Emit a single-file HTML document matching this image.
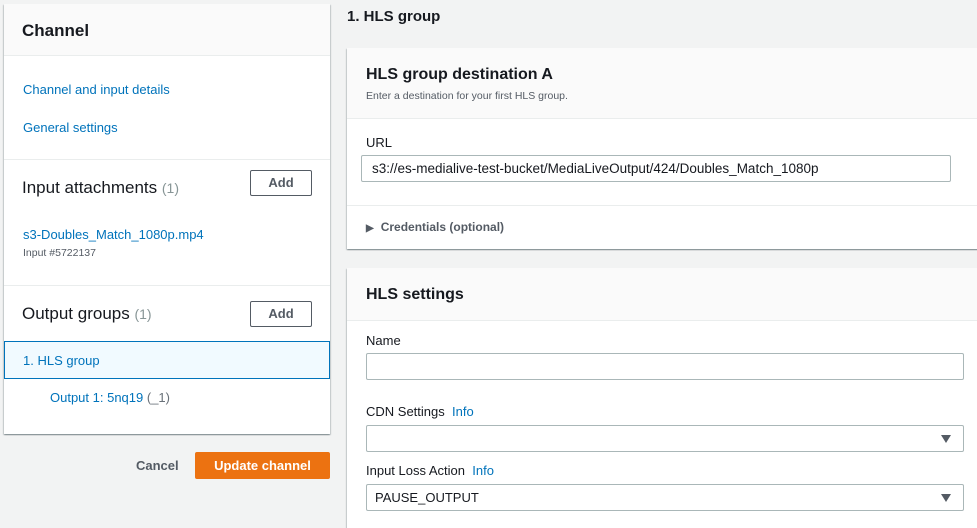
<!DOCTYPE html>
<html><head><style>
*{box-sizing:border-box;margin:0;padding:0}
body{width:977px;height:518px;overflow:hidden;background:#f2f3f3;font-family:"Liberation Sans",Arial,sans-serif;color:#16191f;position:relative}
.abs{position:absolute}
.panel{background:#fff;box-shadow:0 1px 1px rgba(0,28,36,.3),1px 1px 1px rgba(0,28,36,.15),-1px 1px 1px rgba(0,28,36,.15)}
a{color:#0073bb;text-decoration:none}
.btn{position:absolute;border:1px solid #545b64;border-radius:2px;background:#fff;font-weight:bold;font-size:13px;color:#545b64;text-align:center;line-height:24px}
.cnt{color:#879596;font-size:14px}
.lbl{position:absolute;font-size:13px;color:#16191f}
.inp{position:absolute;border:1px solid #aab7b8;border-radius:2px;background:#fff;font-size:13px;padding-left:10px;line-height:25px}
.arr{position:absolute;right:12px;top:9px;width:0;height:0;border-left:5px solid transparent;border-right:5px solid transparent;border-top:8px solid #545b64}
.hr{position:absolute;left:0;right:0;height:1px;background:#eaeded}
</style></head><body>
<div class="abs panel" style="left:4px;top:4px;width:326px;height:430px">
  <div class="abs" style="left:0;top:0;right:0;height:52px;background:#fafafa;border-bottom:1px solid #eaeded"></div>
  <div class="abs" style="left:18px;top:17px;font-size:17px;font-weight:bold">Channel</div>
  <a class="abs" style="left:19px;top:78px;font-size:13px">Channel and input details</a>
  <a class="abs" style="left:19px;top:116px;font-size:13px">General settings</a>
  <div class="hr" style="top:155px"></div>
  <div class="abs" style="left:18px;top:174px;font-size:17px">Input attachments <span class="cnt">(1)</span></div>
  <div class="btn" style="left:246px;top:166px;width:62px;height:26px">Add</div>
  <a class="abs" style="left:19px;top:223px;font-size:13px">s3-Doubles_Match_1080p.mp4</a>
  <div class="abs" style="left:19px;top:243px;font-size:10.5px;color:#545b64">Input #5722137</div>
  <div class="hr" style="top:281px"></div>
  <div class="abs" style="left:18px;top:300px;font-size:17px">Output groups <span class="cnt">(1)</span></div>
  <div class="btn" style="left:246px;top:297px;width:62px;height:26px">Add</div>
  <div class="abs" style="left:0;top:337px;width:326px;height:38px;background:#f1faff;border:1px solid #0073bb"></div>
  <a class="abs" style="left:19px;top:349px;font-size:13px">1. HLS group</a>
  <a class="abs" style="left:46px;top:386px;font-size:13px">Output 1: 5nq19 <span style="color:#687078">(_1)</span></a>
</div>
<div class="abs" style="left:136px;top:458px;font-size:13px;font-weight:bold;color:#545b64">Cancel</div>
<div class="abs" style="left:195px;top:452px;width:135px;height:27px;background:#ec7211;border-radius:2px;color:#fff;font-weight:bold;font-size:13px;text-align:center;line-height:27px">Update channel</div>

<div class="abs" style="left:347px;top:8px;font-size:15px;font-weight:bold">1. HLS group</div>
<div class="abs panel" style="left:347px;top:48px;width:640px;height:201px">
  <div class="abs" style="left:0;top:0;right:0;height:71px;background:#fafafa;border-bottom:1px solid #eaeded"></div>
  <div class="abs" style="left:19px;top:18px;font-size:16px;font-weight:bold">HLS group destination A</div>
  <div class="abs" style="left:19px;top:42px;font-size:10.5px;color:#545b64">Enter a destination for your first HLS group.</div>
  <div class="lbl" style="left:19px;top:87px">URL</div>
  <div class="inp" style="left:14px;top:107px;width:590px;height:27px;font-size:13.5px">s3://es-medialive-test-bucket/MediaLiveOutput/424/Doubles_Match_1080p</div>
  <div class="hr" style="top:157px"></div>
  <div class="abs" style="left:19px;top:172px;font-size:12px;font-weight:bold;color:#545b64"><span style="font-size:10px;margin-right:7px">&#9654;</span>Credentials (optional)</div>
</div>
<div class="abs panel" style="left:347px;top:268px;width:640px;height:260px">
  <div class="abs" style="left:0;top:0;right:0;height:53px;background:#fafafa;border-bottom:1px solid #eaeded"></div>
  <div class="abs" style="left:19px;top:18px;font-size:16px;font-weight:bold">HLS settings</div>
  <div class="lbl" style="left:19px;top:65px">Name</div>
  <div class="inp" style="left:19px;top:85px;width:598px;height:27px"></div>
  <div class="lbl" style="left:19px;top:136px">CDN Settings &nbsp;<a>Info</a></div>
  <div class="inp" style="left:19px;top:157px;width:598px;height:27px"><div class="arr"></div></div>
  <div class="lbl" style="left:19px;top:195px">Input Loss Action &nbsp;<a>Info</a></div>
  <div class="inp" style="left:19px;top:216px;width:598px;height:27px;padding-left:8px">PAUSE_OUTPUT<div class="arr"></div></div>
</div>
</body></html>
